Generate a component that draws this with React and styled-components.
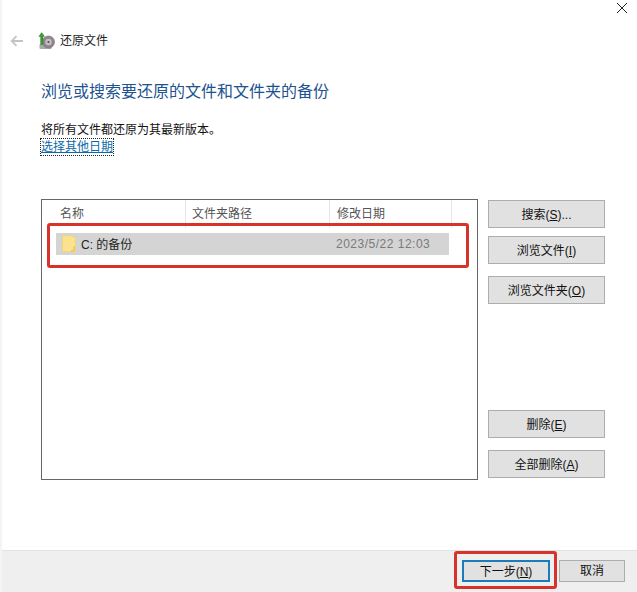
import React from "react"
import styled, { createGlobalStyle } from "styled-components"

const GlobalStyle = createGlobalStyle`
  html, body { margin: 0; padding: 0; background: #fff; }
  body { font-family: "Liberation Sans", "Noto Sans CJK SC", sans-serif; font-size: 12px; color: #1a1a1a; }
`

const Window = styled.div`
  position: relative;
  width: 637px;
  height: 592px;
  box-sizing: border-box;
  overflow: hidden;
  background: #fff;
  border-left: 2px solid #f4f4f4;
  display: flex;
  flex-direction: column;
`
const CloseRow = styled.div`
  height: 29px;
  display: flex;
  justify-content: flex-end;
  padding: 2px 9px 0 0;
  box-sizing: border-box;
`
const NavRow = styled.div`
  height: 24px;
  display: flex;
  align-items: center;
  padding-left: 8px;
`
const NavIcon = styled.svg`
  margin-left: 14px;
`
const NavTitle = styled.span`
  margin-left: 4px;
  font-size: 12px;
  line-height: 24px;
  color: #222;
`
const Body = styled.div`
  flex: 1;
  padding: 0 32px 0 39px;
  display: flex;
  flex-direction: column;
`
const Heading = styled.h1`
  margin: 27px 0 0;
  font-size: 16px;
  line-height: 24px;
  font-weight: 400;
  color: #1d5390;
`
const Note = styled.p`
  margin: 17px 0 0;
  font-size: 12px;
  line-height: 18px;
  color: #111;
`
const DateLink = styled.a`
  align-self: flex-start;
  font-size: 12px;
  line-height: 16px;
  color: #0a6aa8;
  text-decoration: underline;
  outline: 1px dotted #222;
`
const Columns = styled.div`
  margin-top: 44px;
  display: flex;
  justify-content: space-between;
`
const ListBox = styled.div`
  width: 437px;
  height: 281px;
  box-sizing: border-box;
  border: 1.5px solid #666;
  padding: 0 0 0 14px;
`
const ListHeader = styled.div`
  height: 24px;
  display: grid;
  grid-template-columns: 130px 144px 122px;
`
const HeaderCell = styled.div`
  padding-left: ${(p) => p.$indent}px;
  font-size: 12px;
  line-height: 28px;
  color: #555;
  border-right: 1px solid #e6e6e6;
`
const FileRow = styled.div`
  margin-top: 9px;
  width: 393px;
  height: 22px;
  background: #d4d4d4;
  display: grid;
  grid-template-columns: 274px 1fr;
  align-items: center;
`
const RowName = styled.div`
  display: flex;
  align-items: center;
  padding-left: 6px;
  color: #222;
  font-size: 12px;
`
const RowLabel = styled.span`
  margin-left: 5px;
  padding-bottom: 1px;
`
const RowDate = styled.div`
  padding: 0 0 1px 6px;
  color: #7a7a7a;
  font-size: 12px;
  letter-spacing: 0.5px;
`
const SideButtons = styled.div`
  width: 117px;
  padding-top: 1px;
  display: flex;
  flex-direction: column;
`
const SideButton = styled.button`
  width: 117px;
  height: 28px;
  margin-top: ${(p) => p.$top || 0}px;
  padding: 0 0 2px;
  box-sizing: border-box;
  background: #e1e1e1;
  border: 1px solid #adadad;
  font: inherit;
  font-size: 12px;
  color: #111;
`
const Footer = styled.div`
  height: 42px;
  box-sizing: border-box;
  background: #efefef;
  border-top: 1px solid #e2e2e2;
  display: flex;
  justify-content: flex-end;
  gap: 9px;
  padding: 9px 12px 0 0;
`
const FooterButton = styled.button`
  width: ${(p) => p.$w}px;
  height: 22px;
  padding: 0 0 3px;
  box-sizing: border-box;
  background: #e1e1e1;
  border: ${(p) => (p.$primary ? "2px solid #1c7cba" : "1px solid #adadad")};
  font: inherit;
  font-size: 12px;
  color: #111;
`
const Mnemonic = styled.span`
  text-decoration: underline;
`
// 截图上后加的红色标注框
const Callout = styled.div`
  position: absolute;
  left: ${(p) => p.$x}px;
  top: ${(p) => p.$y}px;
  width: ${(p) => p.$w}px;
  height: ${(p) => p.$h}px;
  box-sizing: border-box;
  border: 3px solid #d7332a;
  border-radius: 3px;
  pointer-events: none;
`

const CloseIcon = () => (
  <svg width="12" height="12" viewBox="0 0 12 12">
    <path d="M1 1l10 10M11 1L1 11" stroke="#222" strokeWidth="1" fill="none" />
  </svg>
)
const BackIcon = () => (
  <svg width="14" height="12" viewBox="0 0 14 12">
    <path d="M13 6H2M6.5 1.2L1.7 6l4.8 4.8" stroke="#c4c4c4" strokeWidth="1.8" fill="none" />
  </svg>
)
const RestoreIcon = () => (
  <NavIcon width="18" height="18" viewBox="0 0 18 18">
    <rect x="1.5" y="12" width="12" height="5" rx="1" fill="#a4aca6" />
    <circle cx="10.5" cy="10" r="6" fill="#8d8790" stroke="#6f6a70" strokeWidth="0.6" />
    <circle cx="10.5" cy="10" r="3.2" fill="#cbbcc0" />
    <circle cx="10.5" cy="10" r="1.1" fill="#4e4a4e" />
    <path d="M3.6 0.6L6.6 4.6H5V12.5H2.6V4.6H0.8z" fill="#3f9a35" stroke="#2a6f26" strokeWidth="0.4" />
  </NavIcon>
)
const FolderIcon = () => (
  <svg width="14" height="18" viewBox="0 0 14 18">
    <path d="M0.5 0.8h9.5l3.5 2.5v13.5H0.5z" fill="#fbe38e" stroke="#f0d26e" strokeWidth="0.8" />
    <path d="M10 14.8V16.8M12 11.3v5" stroke="#d8b452" strokeWidth="1" />
  </svg>
)

export default function App() {
  return (
    <>
      <GlobalStyle />
      <Window>
        <CloseRow>
          <CloseIcon />
        </CloseRow>
        <NavRow>
          <BackIcon />
          <RestoreIcon />
          <NavTitle>还原文件</NavTitle>
        </NavRow>
        <Body>
          <Heading>浏览或搜索要还原的文件和文件夹的备份</Heading>
          <Note>将所有文件都还原为其最新版本。</Note>
          <DateLink>选择其他日期</DateLink>
          <Columns>
            <ListBox>
              <ListHeader>
                <HeaderCell $indent={4}>名称</HeaderCell>
                <HeaderCell $indent={6}>文件夹路径</HeaderCell>
                <HeaderCell $indent={7}>修改日期</HeaderCell>
              </ListHeader>
              <FileRow>
                <RowName>
                  <FolderIcon />
                  <RowLabel>C: 的备份</RowLabel>
                </RowName>
                <RowDate>2023/5/22 12:03</RowDate>
              </FileRow>
            </ListBox>
            <SideButtons>
              <SideButton>搜索(<Mnemonic>S</Mnemonic>)...</SideButton>
              <SideButton $top={8}>浏览文件(<Mnemonic>I</Mnemonic>)</SideButton>
              <SideButton $top={12}>浏览文件夹(<Mnemonic>O</Mnemonic>)</SideButton>
              <SideButton $top={106}>删除(<Mnemonic>E</Mnemonic>)</SideButton>
              <SideButton $top={12}>全部删除(<Mnemonic>A</Mnemonic>)</SideButton>
            </SideButtons>
          </Columns>
        </Body>
        <Footer>
          <FooterButton $w={88} $primary>下一步(<Mnemonic>N</Mnemonic>)</FooterButton>
          <FooterButton $w={66}>取消</FooterButton>
        </Footer>
        <Callout $x={45} $y={223} $w={422} $h={45} />
        <Callout $x={452} $y={551} $w={103} $h={38} />
      </Window>
    </>
  )
}
